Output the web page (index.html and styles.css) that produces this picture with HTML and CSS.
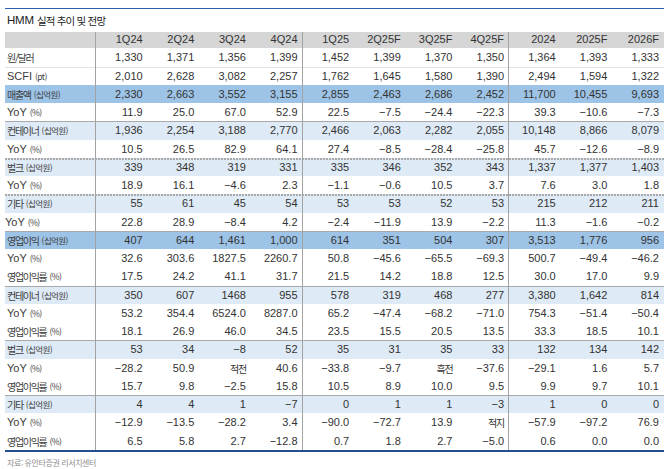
FILE: index.html
```html
<!DOCTYPE html>
<html lang="ko">
<head>
<meta charset="utf-8">
<title>HMM 실적 추이 및 전망</title>
<link rel="stylesheet" href="styles.css">
</head>
<body>
<div class="report">
  <div class="title"><span class="en">HMM</span> 실적 추이 및 전망</div>
  <div class="grid">
    <div class="row head">
      <div class="lbl vr"></div>
      <div>1Q24</div><div>2Q24</div><div>3Q24</div><div class="vr">4Q24</div>
      <div>1Q25</div><div>2Q25F</div><div>3Q25F</div><div class="vr">4Q25F</div>
      <div>2024</div><div>2025F</div><div>2026F</div>
    </div>
    <div class="row">
      <div class="lbl vr">원/달러</div>
      <div>1,330</div><div>1,371</div><div>1,356</div><div class="vr">1,399</div>
      <div>1,452</div><div>1,399</div><div>1,370</div><div class="vr">1,350</div>
      <div>1,364</div><div>1,393</div><div>1,333</div>
    </div>
    <div class="row ln-light">
      <div class="lbl vr"><span class="en">SCFI</span><small>(pt)</small></div>
      <div>2,010</div><div>2,628</div><div>3,082</div><div class="vr">2,257</div>
      <div>1,762</div><div>1,645</div><div>1,580</div><div class="vr">1,390</div>
      <div>2,494</div><div>1,594</div><div>1,322</div>
    </div>
    <div class="row hl">
      <div class="lbl vr">매출액<small>(십억원)</small></div>
      <div>2,330</div><div>2,663</div><div>3,552</div><div class="vr">3,155</div>
      <div>2,855</div><div>2,463</div><div>2,686</div><div class="vr">2,452</div>
      <div>11,700</div><div>10,455</div><div>9,693</div>
    </div>
    <div class="row">
      <div class="lbl vr"><span class="en">YoY</span><small>(%)</small></div>
      <div>11.9</div><div>25.0</div><div>67.0</div><div class="vr">52.9</div>
      <div>22.5</div><div>−7.5</div><div>−24.4</div><div class="vr">−22.3</div>
      <div>39.3</div><div>−10.6</div><div>−7.3</div>
    </div>
    <div class="row sub ln-solid">
      <div class="lbl vr">컨테이너<small>(십억원)</small></div>
      <div>1,936</div><div>2,254</div><div>3,188</div><div class="vr">2,770</div>
      <div>2,466</div><div>2,063</div><div>2,282</div><div class="vr">2,055</div>
      <div>10,148</div><div>8,866</div><div>8,079</div>
    </div>
    <div class="row">
      <div class="lbl vr"><span class="en">YoY</span><small>(%)</small></div>
      <div>10.5</div><div>26.5</div><div>82.9</div><div class="vr">64.1</div>
      <div>27.4</div><div>−8.5</div><div>−28.4</div><div class="vr">−25.8</div>
      <div>45.7</div><div>−12.6</div><div>−8.9</div>
    </div>
    <div class="row sub ln-dot">
      <div class="lbl vr">벌크<small>(십억원)</small></div>
      <div>339</div><div>348</div><div>319</div><div class="vr">331</div>
      <div>335</div><div>346</div><div>352</div><div class="vr">343</div>
      <div>1,337</div><div>1,377</div><div>1,403</div>
    </div>
    <div class="row">
      <div class="lbl vr"><span class="en">YoY</span><small>(%)</small></div>
      <div>18.9</div><div>16.1</div><div>−4.6</div><div class="vr">2.3</div>
      <div>−1.1</div><div>−0.6</div><div>10.5</div><div class="vr">3.7</div>
      <div>7.6</div><div>3.0</div><div>1.8</div>
    </div>
    <div class="row sub ln-dot">
      <div class="lbl vr">기타<small>(십억원)</small></div>
      <div>55</div><div>61</div><div>45</div><div class="vr">54</div>
      <div>53</div><div>53</div><div>52</div><div class="vr">53</div>
      <div>215</div><div>212</div><div>211</div>
    </div>
    <div class="row">
      <div class="lbl vr shift"><span class="en">YoY</span><small>(%)</small></div>
      <div>22.8</div><div>28.9</div><div>−8.4</div><div class="vr">4.2</div>
      <div>−2.4</div><div>−11.9</div><div>13.9</div><div class="vr">−2.2</div>
      <div>11.3</div><div>−1.6</div><div>−0.2</div>
    </div>
    <div class="row hl ln-solid">
      <div class="lbl vr">영업이익<small>(십억원)</small></div>
      <div>407</div><div>644</div><div>1,461</div><div class="vr">1,000</div>
      <div>614</div><div>351</div><div>504</div><div class="vr">307</div>
      <div>3,513</div><div>1,776</div><div>956</div>
    </div>
    <div class="row">
      <div class="lbl vr"><span class="en">YoY</span><small>(%)</small></div>
      <div>32.6</div><div>303.6</div><div>1827.5</div><div class="vr">2260.7</div>
      <div>50.8</div><div>−45.6</div><div>−65.5</div><div class="vr">−69.3</div>
      <div>500.7</div><div>−49.4</div><div>−46.2</div>
    </div>
    <div class="row">
      <div class="lbl vr">영업이익률<small>(%)</small></div>
      <div>17.5</div><div>24.2</div><div>41.1</div><div class="vr">31.7</div>
      <div>21.5</div><div>14.2</div><div>18.8</div><div class="vr">12.5</div>
      <div>30.0</div><div>17.0</div><div>9.9</div>
    </div>
    <div class="row sub ln-solid">
      <div class="lbl vr">컨테이너<small>(십억원)</small></div>
      <div>350</div><div>607</div><div>1468</div><div class="vr">955</div>
      <div>578</div><div>319</div><div>468</div><div class="vr">277</div>
      <div>3,380</div><div>1,642</div><div>814</div>
    </div>
    <div class="row">
      <div class="lbl vr"><span class="en">YoY</span><small>(%)</small></div>
      <div>53.2</div><div>354.4</div><div>6524.0</div><div class="vr">8287.0</div>
      <div>65.2</div><div>−47.4</div><div>−68.2</div><div class="vr">−71.0</div>
      <div>754.3</div><div>−51.4</div><div>−50.4</div>
    </div>
    <div class="row">
      <div class="lbl vr">영업이익률<small>(%)</small></div>
      <div>18.1</div><div>26.9</div><div>46.0</div><div class="vr">34.5</div>
      <div>23.5</div><div>15.5</div><div>20.5</div><div class="vr">13.5</div>
      <div>33.3</div><div>18.5</div><div>10.1</div>
    </div>
    <div class="row sub ln-solid">
      <div class="lbl vr">벌크<small>(십억원)</small></div>
      <div>53</div><div>34</div><div>−8</div><div class="vr">52</div>
      <div>35</div><div>31</div><div>35</div><div class="vr">33</div>
      <div>132</div><div>134</div><div>142</div>
    </div>
    <div class="row">
      <div class="lbl vr"><span class="en">YoY</span><small>(%)</small></div>
      <div>−28.2</div><div>50.9</div><div class="ko">적전</div><div class="vr">40.6</div>
      <div>−33.8</div><div>−9.7</div><div class="ko">흑전</div><div class="vr">−37.6</div>
      <div>−29.1</div><div>1.6</div><div>5.7</div>
    </div>
    <div class="row">
      <div class="lbl vr">영업이익률<small>(%)</small></div>
      <div>15.7</div><div>9.8</div><div>−2.5</div><div class="vr">15.8</div>
      <div>10.5</div><div>8.9</div><div>10.0</div><div class="vr">9.5</div>
      <div>9.9</div><div>9.7</div><div>10.1</div>
    </div>
    <div class="row sub ln-solid">
      <div class="lbl vr">기타<small>(십억원)</small></div>
      <div>4</div><div>4</div><div>1</div><div class="vr">−7</div>
      <div>0</div><div>1</div><div>1</div><div class="vr">−3</div>
      <div>1</div><div>0</div><div>0</div>
    </div>
    <div class="row">
      <div class="lbl vr"><span class="en">YoY</span><small>(%)</small></div>
      <div>−12.9</div><div>−13.5</div><div>−28.2</div><div class="vr">3.4</div>
      <div>−90.0</div><div>−72.7</div><div>13.9</div><div class="vr ko">적지</div>
      <div>−57.9</div><div>−97.2</div><div>76.9</div>
    </div>
    <div class="row">
      <div class="lbl vr">영업이익률<small>(%)</small></div>
      <div>6.5</div><div>5.8</div><div>2.7</div><div class="vr">−12.8</div>
      <div>0.7</div><div>1.8</div><div>2.7</div><div class="vr">−5.0</div>
      <div>0.6</div><div>0.0</div><div>0.0</div>
    </div>
  </div>
  <div class="source">자료: 유안타증권 리서치센터</div>
</div>
</body>
</html>
```

FILE: styles.css
```css
html, body {
  margin: 0;
  padding: 0;
  background: #ffffff;
}

body {
  font-family: "Liberation Sans Narrow", "Arial Narrow", "Liberation Sans", "Noto Sans CJK KR", sans-serif;
  color: #333333;
}

.report {
  width: 659px;
  margin-left: 5px;
  padding-top: 8px;
}

.title {
  border-top: 1px solid #2a60ae;
  height: 22.7px;
  display: flex;
  align-items: center;
  gap: 3px;
  padding-left: 2px;
  font-family: "Noto Sans CJK KR", sans-serif;
  font-size: 10.5px;
  letter-spacing: -0.8px;
  color: #222222;
}

.title .en {
  font-family: "Liberation Sans Narrow", "Liberation Sans", sans-serif;
  font-size: 11.5px;
  letter-spacing: -0.2px;
}

.grid {
  display: flex;
  flex-direction: column;
  border-bottom: 2px solid #24508f;
}

.row {
  display: grid;
  grid-template-columns: 91px repeat(11, 1fr);
  height: 18.25px;
  background-repeat: no-repeat;
  background-position: top left;
}

.row.head {
  height: 16.6px;
  background-color: #d6d6d6;
}

.row > div {
  display: flex;
  align-items: center;
  justify-content: flex-end;
  padding: 1px 5px 0 0;
  white-space: nowrap;
  font-size: 11px;
  line-height: 13px;
  color: #333333;
}

.row.head > div {
  padding-top: 0;
}

.row > .vr {
  box-shadow: inset -1px 0 0 #a2a2a2;
}

.row > .lbl {
  justify-content: flex-start;
  align-items: center;
  gap: 3px;
  padding: 1px 0 0 2px;
  font-family: "Noto Sans CJK KR", sans-serif;
  font-size: 10px;
  letter-spacing: -1.3px;
  color: #3c3c3c;
}

.row > .lbl.shift {
  padding-left: 0;
}

.lbl .en {
  font-family: "Liberation Sans Narrow", "Liberation Sans", sans-serif;
  font-size: 11px;
  letter-spacing: 0;
}

.lbl small {
  font-family: "Noto Sans CJK KR", sans-serif;
  font-size: 8.5px;
  letter-spacing: -0.6px;
}

.row > .ko {
  font-family: "Noto Sans CJK KR", sans-serif;
  font-size: 10px;
  letter-spacing: -1.2px;
}

.row.hl {
  background-color: #9dc3e6;
}

.row.sub {
  background-color: #deeaf6;
}

.row.ln-light {
  background-image: linear-gradient(#e2e2e2, #e2e2e2);
  background-size: 100% 1px;
}

.row.ln-solid {
  background-image: linear-gradient(#a9a9a9, #a9a9a9);
  background-size: 100% 1px;
}

.row.ln-dot {
  background-image: repeating-linear-gradient(90deg, #a9a9a9 0 2px, transparent 2px 3px);
  background-size: 100% 2px;
}

.source {
  padding: 5px 0 0 2px;
  font-family: "Noto Sans CJK KR", sans-serif;
  font-size: 8px;
  letter-spacing: -0.4px;
  color: #8c8c8c;
  line-height: 12px;
}
```
